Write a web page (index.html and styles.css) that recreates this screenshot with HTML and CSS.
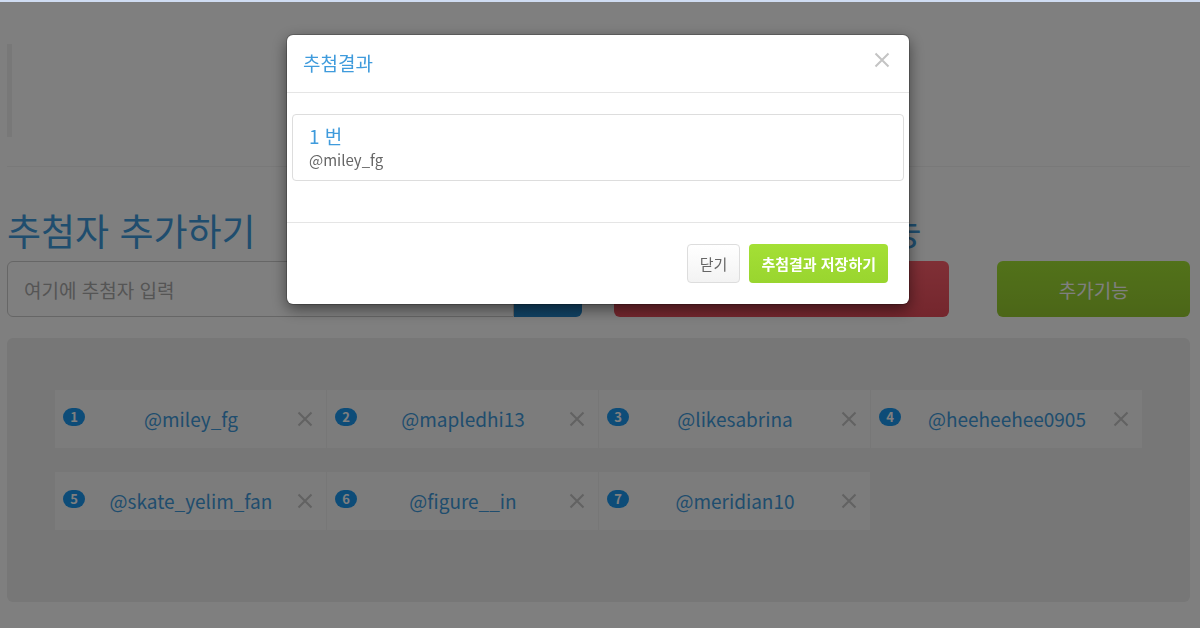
FILE: index.html
```html
<!DOCTYPE html>
<html lang="ko">
<head>
  <meta charset="UTF-8">
  <meta name="viewport" content="width=device-width, initial-scale=1.0">
  <title>추첨결과</title>
  <link rel="stylesheet" href="styles.css">
</head>
<body>
  <main class="container">
    <blockquote class="intro"></blockquote>
    <hr>

    <div class="controls">
      <form class="add-form">
        <h1><label for="nameInput">추첨자 추가하기</label></h1>
        <div class="input-group">
          <input type="text" id="nameInput" placeholder="여기에 추첨자 입력">
          <button type="button" class="btn-add" aria-label="추가"></button>
        </div>
      </form>
      <section class="features">
        <h1>추첨하기 / 추가기능</h1>
        <div class="feature-buttons">
          <button type="button" class="btn-large btn-danger" aria-label="추첨"></button>
          <button type="button" class="btn-large btn-success">추가기능</button>
        </div>
      </section>
    </div>

    <ul class="well">
      <li class="entry"><span class="badge">1</span><span class="name">@miley_fg</span><button type="button" class="close" aria-label="삭제"><svg viewBox="0 0 16 16"><path d="M1.5 1.5l13 13M14.5 1.5l-13 13"/></svg></button></li>
      <li class="entry"><span class="badge">2</span><span class="name">@mapledhi13</span><button type="button" class="close" aria-label="삭제"><svg viewBox="0 0 16 16"><path d="M1.5 1.5l13 13M14.5 1.5l-13 13"/></svg></button></li>
      <li class="entry"><span class="badge">3</span><span class="name">@likesabrina</span><button type="button" class="close" aria-label="삭제"><svg viewBox="0 0 16 16"><path d="M1.5 1.5l13 13M14.5 1.5l-13 13"/></svg></button></li>
      <li class="entry"><span class="badge">4</span><span class="name">@heeheehee0905</span><button type="button" class="close" aria-label="삭제"><svg viewBox="0 0 16 16"><path d="M1.5 1.5l13 13M14.5 1.5l-13 13"/></svg></button></li>
      <li class="entry"><span class="badge">5</span><span class="name">@skate_yelim_fan</span><button type="button" class="close" aria-label="삭제"><svg viewBox="0 0 16 16"><path d="M1.5 1.5l13 13M14.5 1.5l-13 13"/></svg></button></li>
      <li class="entry"><span class="badge">6</span><span class="name">@figure__in</span><button type="button" class="close" aria-label="삭제"><svg viewBox="0 0 16 16"><path d="M1.5 1.5l13 13M14.5 1.5l-13 13"/></svg></button></li>
      <li class="entry"><span class="badge">7</span><span class="name">@meridian10</span><button type="button" class="close" aria-label="삭제"><svg viewBox="0 0 16 16"><path d="M1.5 1.5l13 13M14.5 1.5l-13 13"/></svg></button></li>
    </ul>
  </main>

  <div class="backdrop">
    <div class="modal" role="dialog" aria-labelledby="modalTitle">
      <div class="modal-header">
        <h4 id="modalTitle">추첨결과</h4>
        <button type="button" class="close" aria-label="창 닫기"><svg viewBox="0 0 16 16"><path d="M1.5 1.5l13 13M14.5 1.5l-13 13"/></svg></button>
      </div>
      <div class="modal-body">
        <a href="#" class="result">
          <h4>1 번</h4>
          <p>@miley_fg</p>
        </a>
      </div>
      <div class="modal-footer">
        <button type="button" class="btn btn-default">닫기</button>
        <button type="button" class="btn btn-save">추첨결과 저장하기</button>
      </div>
    </div>
  </div>
</body>
</html>
```
FILE: styles.css
```css
* {
  box-sizing: border-box;
}

body {
  margin: 0;
  border-top: 2px solid #cfdcf2;
  background: #fff;
  color: #666;
  font-family: "Noto Sans CJK KR", sans-serif;
  font-size: 15px;
  line-height: 22px;
  overflow: hidden;
}

h1, h4, p, ul {
  margin: 0;
  padding: 0;
}

h1, h4 {
  color: #3f9bdc;
  font-weight: 400;
}

h1 {
  font-size: 37px;
  line-height: 42px;
}

h4 {
  font-size: 19px;
  line-height: 22px;
}

button, input {
  font-family: inherit;
}

button {
  cursor: pointer;
}

.container {
  padding: 42px 10px 26px 7px;
}

.intro {
  height: 93px;
  margin: 0;
  border-left: 5px solid #f0f0f0;
}

hr {
  margin: 29px 0 42px;
  border: 0;
  border-top: 1px solid #f2f2f2;
}

.controls {
  display: grid;
  grid-template-columns: 575fr 576fr;
  gap: 32px;
}

.input-group {
  display: flex;
  height: 56px;
  margin-top: 10px;
}

.input-group input {
  flex: 1;
  min-width: 0;
  padding: 0 16px;
  border: 1px solid #ccc;
  border-radius: 6px 0 0 6px;
  font-size: 19px;
}

.input-group input::placeholder {
  color: #aaa;
}

.btn-add {
  width: 68px;
  border: 0;
  border-radius: 0 6px 6px 0;
  background: linear-gradient(#3399dd, #1f83c8);
}

.feature-buttons {
  display: grid;
  grid-template-columns: 336fr 193fr;
  gap: 48px;
  margin-top: 10px;
}

.btn-large {
  height: 56px;
  border: 0;
  border-radius: 6px;
  color: #fff;
  font-size: 19px;
}

.btn-danger {
  background: linear-gradient(#ff5f6c, #e84d5b);
}

.btn-success {
  background: linear-gradient(#a4e434, #97cc30);
}

.well {
  display: grid;
  grid-template-columns: repeat(4, 1fr);
  align-content: start;
  row-gap: 24px;
  min-height: 264px;
  margin-top: 21px;
  padding: 52px 47px 48px 48px;
  border-radius: 6px;
  background: #eee;
  list-style: none;
}

.entry {
  display: flex;
  align-items: center;
  height: 58px;
  padding: 0 13px 0 8px;
  border-right: 1px solid #eee;
  background: #f8f8f8;
}

.badge {
  width: 22px;
  margin-bottom: 4px;
  border-radius: 9px;
  background: #1b98f0;
  color: #fff;
  font-size: 13px;
  font-weight: 700;
  line-height: 18px;
  text-align: center;
}

.name {
  flex: 1;
  color: #3f9bdc;
  font-size: 19px;
  text-align: center;
}

.close {
  display: flex;
  padding: 0;
  border: 0;
  background: none;
}

.close svg {
  width: 16px;
  height: 16px;
  fill: none;
  stroke: #c4c4c4;
  stroke-width: 2;
}

.backdrop {
  position: fixed;
  top: 2px;
  right: 0;
  bottom: 0;
  left: 0;
  padding: 33px 11px 0 7px;
  background: rgba(0, 0, 0, 0.5);
}

.modal {
  max-width: 622px;
  margin: 0 auto;
  border-radius: 6px;
  background: #fff;
  box-shadow: 0 5px 15px rgba(0, 0, 0, 0.5), 0 0 0 1px rgba(0, 0, 0, 0.2);
}

.modal-header {
  display: flex;
  justify-content: space-between;
  align-items: flex-start;
  padding: 17px 19px 18px 16px;
  border-bottom: 1px solid #e5e5e5;
}

.modal-body {
  padding: 21px 5px 41px;
}

.result {
  display: block;
  padding: 10px 16px 9px;
  border: 1px solid #ddd;
  border-radius: 4px;
  color: #666;
  text-decoration: none;
}

.result h4 {
  margin-bottom: 2px;
}

.modal-footer {
  display: flex;
  justify-content: flex-end;
  gap: 9px;
  padding: 21px;
  border-top: 1px solid #e5e5e5;
}

.btn {
  height: 39px;
  padding: 0 12px;
  border: 0;
  border-radius: 4px;
  font-size: 15px;
}

.btn-default {
  border: 1px solid #ddd;
  background: linear-gradient(#fff, #f3f3f3);
  color: #666;
}

.btn-save {
  background: linear-gradient(#a4e035, #99d52f);
  color: #fff;
  font-weight: 700;
}
```
